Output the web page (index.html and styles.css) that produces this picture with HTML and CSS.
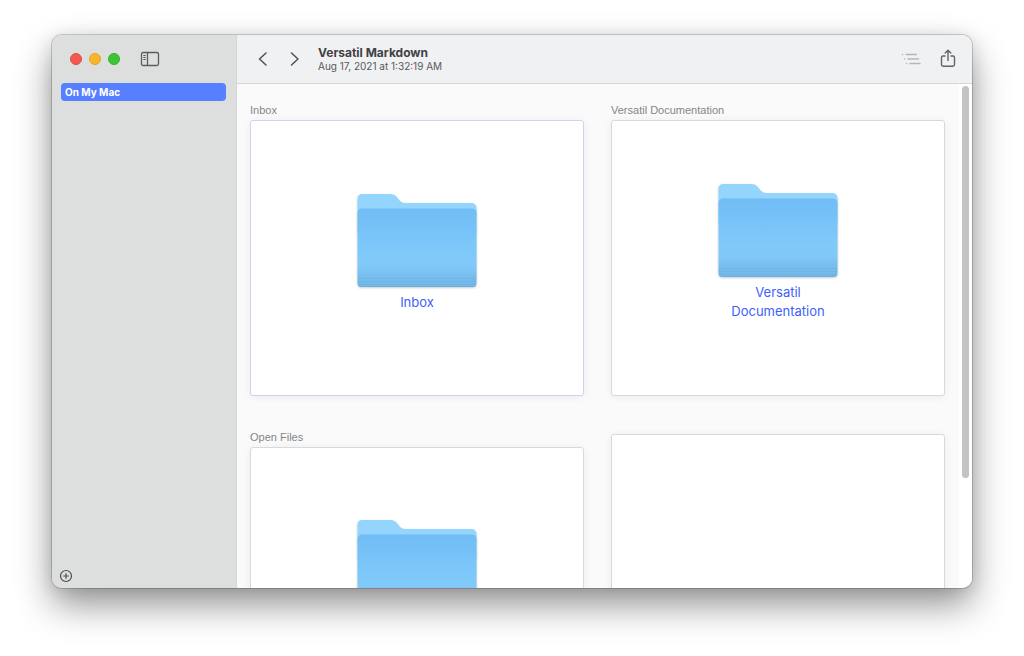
FILE: index.html
```html
<!DOCTYPE html>
<html lang="en">
<head>
<meta charset="utf-8">
<title>Versatil Markdown</title>
<link rel="stylesheet" href="styles.css">
</head>
<body>
<svg class="defs" aria-hidden="true">
  <defs>
    <linearGradient id="front" x1="0" y1="0" x2="0" y2="1">
      <stop offset="0" stop-color="#70bcf5"/>
      <stop offset=".6" stop-color="#80cafa"/>
      <stop offset=".74" stop-color="#80c8f8"/>
      <stop offset=".88" stop-color="#76bcec"/>
      <stop offset="1" stop-color="#74b9e9"/>
    </linearGradient>
    <symbol id="folder" viewBox="0 0 120 96">
      <path fill="#94d5fd" d="M.5 6Q.5 1 5.500 1H33Q37 1 39 3L43 8Q45 10 48 10H114Q119.500 10 119.500 15.500V40H.5Z"/>
      <path fill="url(#front)" d="M.5 20Q.5 15.500 5.500 15.500H114.500Q119.500 15.500 119.500 20V90Q119.500 94 115.500 94H4.500Q.5 94 .5 90Z"/>
      <path stroke="#64a9da" stroke-opacity=".4" d="M1 85.500H119M1 88.500H119M1 91.500H119"/>
      <path fill="none" stroke="#5f9fcb" stroke-opacity=".4" d="M1 92Q2 93.500 4 93.500H116Q118 93.500 119 92"/>
    </symbol>
  </defs>
</svg>
<div class="window">
  <aside class="sidebar">
    <div class="controls">
      <button class="light red" aria-label="Close"></button>
      <button class="light yellow" aria-label="Minimize"></button>
      <button class="light green" aria-label="Zoom"></button>
      <button class="icon toggle" aria-label="Toggle sidebar">
        <svg width="20" height="16" viewBox="0 0 20 16" fill="none" stroke="#5b5c5c" stroke-width="1.300"><rect x="1.500" y="1.500" width="17" height="13" rx="1.500"/><path d="M7.500 1.500V14.500"/><path stroke-width="1" d="M3.300 4.500H5.700M3.300 6.500H5.700M3.300 8.500H5.700"/></svg>
      </button>
    </div>
    <nav class="places"><a class="place" href="#mac">On My Mac</a></nav>
    <button class="icon add" aria-label="Add">
      <svg width="14" height="14" viewBox="0 0 14 14" fill="none" stroke="#4c4d4d" stroke-width="1.200"><circle cx="7" cy="7" r="5.500"/><path d="M7 4.200V9.800M4.200 7H9.800"/></svg>
    </button>
  </aside>
  <main class="main">
    <header class="toolbar">
      <button class="icon" aria-label="Back"><svg width="12" height="16" viewBox="0 0 12 16" fill="none" stroke="#505153" stroke-width="1.500" stroke-linecap="round" stroke-linejoin="round"><path d="M9 2L2.500 8L9 14"/></svg></button>
      <button class="icon forward" aria-label="Forward"><svg width="12" height="16" viewBox="0 0 12 16" fill="none" stroke="#505153" stroke-width="1.500" stroke-linecap="round" stroke-linejoin="round"><path d="M2.500 2L9 8L2.500 14"/></svg></button>
      <div class="heading">
        <h1 class="title">Versatil Markdown</h1>
        <p class="date">Aug 17, 2021 at 1:32:19 AM</p>
      </div>
      <button class="icon" aria-label="Outline"><svg width="20" height="16" viewBox="0 0 20 16" stroke="#b5b6b8" stroke-width="1.400" stroke-linecap="round"><path d="M1.500 3.500H1.700M5 3.500H15.500M3.500 8H3.700M7 8H17.500M5.500 12.500H5.700M9 12.500H19"/></svg></button>
      <button class="icon share" aria-label="Share"><svg width="16" height="20" viewBox="0 0 16 20" fill="none" stroke="#626366" stroke-width="1.400" stroke-linecap="round" stroke-linejoin="round"><path d="M5 7H3Q1.500 7 1.500 8.500V15.500Q1.500 17.200 3.200 17.200H12.800Q14.500 17.200 14.500 15.500V8.500Q14.500 7 13 7H11M8 11.500V1.500M5.200 4L8 1.200L10.800 4"/></svg></button>
    </header>
    <div class="body">
      <div class="grid">
        <section class="item">
          <h2 class="caption">Inbox</h2>
          <a class="card selected" href="#inbox"><svg class="folder"><use href="#folder"/></svg><span class="name">Inbox</span></a>
        </section>
        <section class="item">
          <h2 class="caption">Versatil Documentation</h2>
          <a class="card" href="#docs"><svg class="folder"><use href="#folder"/></svg><span class="name">Versatil Documentation</span></a>
        </section>
        <section class="item">
          <h2 class="caption">Open Files</h2>
          <a class="card" href="#open" aria-label="Open Files"><svg class="folder"><use href="#folder"/></svg></a>
        </section>
        <section class="item"><div class="card"></div></section>
      </div>
      <div class="track"><div class="thumb"></div></div>
    </div>
  </main>
</div>
</body>
</html>
```
FILE: styles.css
```css
* { box-sizing: border-box; }
body {
  margin: 0;
  height: 100vh;
  padding: 35px 52px 68px;
  overflow: hidden;
  background: #fff;
  font-family: Inter, "Liberation Sans", sans-serif;
}
h1, h2, p { margin: 0; }
a { text-decoration: none; }
button { padding: 0; border: 0; background: none; }
svg { display: block; }
.defs { position: absolute; width: 0; height: 0; }

.window {
  display: flex;
  height: 100%;
  border-radius: 10px;
  overflow: hidden;
  background: #fff;
  box-shadow: 0 0 0 1px rgba(0, 0, 0, .17), 0 17px 36px rgba(0, 0, 0, .42), 0 2px 16px rgba(0, 0, 0, .1);
}

.sidebar {
  display: flex;
  flex-direction: column;
  flex: 0 0 185px;
  background: #dddfde;
  border-right: 1px solid #d5d7d6;
}
.controls {
  display: flex;
  align-items: center;
  gap: 7px;
  height: 48px;
  padding-left: 18px;
}
.light {
  width: 12px;
  height: 12px;
  border-radius: 50%;
}
.red { background: #f25950; border: 1px solid #e34b44; }
.yellow { background: #f6b62c; border: 1px solid #e2a327; }
.green { background: #3ec437; border: 1px solid #34b02e; }
.toggle { margin-left: 13px; }
.places { flex: 1; padding: 0 10px 0 9px; }
.place {
  display: block;
  padding-left: 4px;
  border-radius: 4px;
  background: #587fff;
  color: #fff;
  font-size: 10px;
  font-weight: 700;
  line-height: 18px;
}
.add { align-self: flex-start; margin: 0 0 5px 7px; }

.main { display: flex; flex: 1; flex-direction: column; min-width: 0; }
.toolbar {
  display: flex;
  flex: 0 0 49px;
  align-items: center;
  padding: 0 16px 0 20px;
  background: #f0f1f3;
  border-bottom: 1px solid #d6d6d8;
}
.forward { margin-left: 20px; }
.heading { flex: 1; margin-left: 17px; padding-top: 1px; }
.title { color: #404143; font-size: 12px; font-weight: 700; line-height: 14px; }
.date { color: #58595b; font-size: 10px; line-height: 13px; }
.share { margin-left: 19px; }

.body { display: flex; flex: 1; min-height: 0; }
.grid {
  display: grid;
  flex: 1;
  grid-template-columns: 1fr 1fr;
  align-content: start;
  gap: 35px 27px;
  padding: 20px 14px 0 13px;
  overflow: hidden;
  background: #fafafa;
}
.caption {
  color: #858585;
  font: 11px/13px "Liberation Sans", Arial, sans-serif;
}
.card {
  display: flex;
  flex-direction: column;
  align-items: center;
  justify-content: center;
  height: 276px;
  margin-top: 3px;
  padding-bottom: 12px;
  border: 1px solid #d9d9d9;
  border-radius: 3px;
  background: #fff;
  box-shadow: 0 1px 8px rgba(0, 0, 0, .06);
}
.selected { border-color: #cfd3f2; }
.folder {
  width: 120px;
  height: 96px;
  margin-bottom: 4px;
  filter: drop-shadow(0 1px 1px rgba(0, 0, 0, .2));
}
.card:not(:has(.name)) { padding-bottom: 32px; }
.name {
  max-width: 120px;
  color: #3c61fa;
  font-size: 13px;
  line-height: 19px;
  text-align: center;
}

.track { flex: 0 0 13px; padding: 2px 3px 0 3px; background: #fff; }
.thumb { height: 78%; border-radius: 4px; background: #c3c3c3; }
```
